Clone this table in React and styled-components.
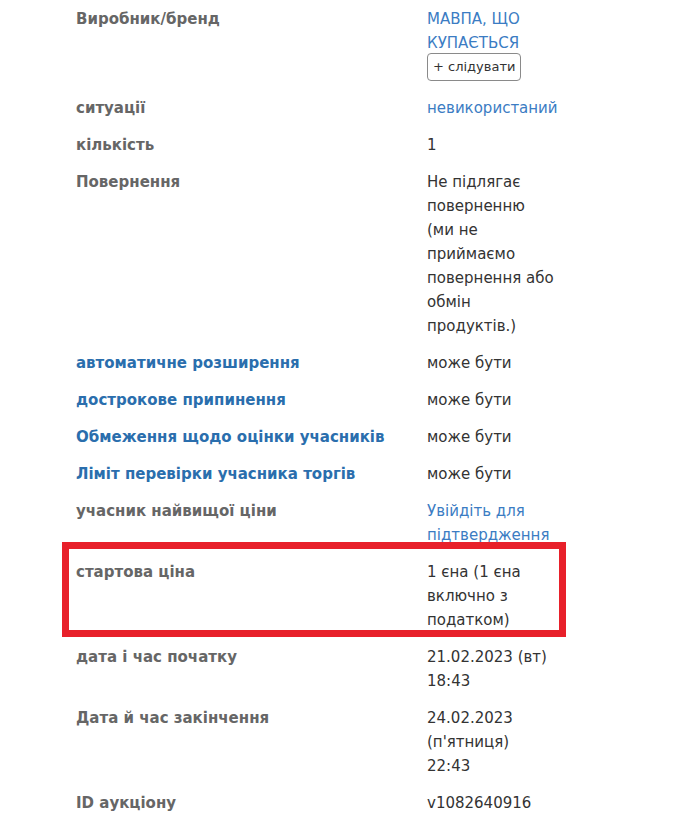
import React from "react";
import styled, { createGlobalStyle } from "styled-components";

const Global = createGlobalStyle`
  html, body { margin: 0; padding: 0; background: #fff; }
  body { font-family: "DejaVu Sans", Verdana, sans-serif; }
`;

const Table = styled.div`
  padding: 0 0 20px 76px;
  display: flex;
  flex-direction: column;
  align-items: flex-start;
`;

const Row = styled.div`
  position: relative;
  display: grid;
  grid-template-columns: 351px 128px;
  padding: 6.5px 0;
  ${(p) =>
    p.$highlight &&
    `
    &::after {
      content: "";
      position: absolute;
      top: -11px;
      left: -14px;
      right: -11px;
      bottom: 1px;
      border: 7px solid #e8202a;
      pointer-events: none;
    }
  `}
`;

const Label = styled.div`
  font-family: "DejaVu Sans", Verdana, sans-serif;
  font-weight: bold;
  font-size: 15px;
  line-height: 24px;
  color: ${(p) => (p.$blue ? "#2a6ead" : "#666666")};
`;

const Value = styled.div`
  font-size: 15px;
  line-height: 24px;
  color: ${(p) => (p.$link ? "#3b7cc3" : "#333333")};
`;

const Brand = styled.span`
  display: block;
  color: #3b7cc3;
`;

const FollowButton = styled.button`
  display: block;
  box-sizing: border-box;
  margin: -2px 0 2px;
  padding: 4px 5px;
  height: 28px;
  border: 1px solid #8a8a8a;
  border-radius: 4px;
  background: #fff;
  color: #333;
  font-family: "DejaVu Sans", Verdana, sans-serif;
  font-size: 13px;
  line-height: 18px;
  cursor: pointer;
`;

const rows = [
  { label: "ситуації", value: "невикористаний", link: true },
  { label: "кількість", value: "1" },
  {
    label: "Повернення",
    value: "Не підлягає поверненню (ми не приймаємо повернення або обмін продуктів.)",
  },
  { label: "автоматичне розширення", value: "може бути", blue: true },
  { label: "дострокове припинення", value: "може бути", blue: true },
  { label: "Обмеження щодо оцінки учасників", value: "може бути", blue: true },
  { label: "Ліміт перевірки учасника торгів", value: "може бути", blue: true },
  { label: "учасник найвищої ціни", value: "Увійдіть для підтвердження", link: true },
  { label: "стартова ціна", value: "1 єна (1 єна включно з податком)", highlight: true },
  { label: "дата і час початку", value: "21.02.2023 (вт) 18:43" },
  { label: "Дата й час закінчення", value: "24.02.2023 (п'ятниця) 22:43" },
  { label: "ID аукціону", value: "v1082640916" },
];

export default function App() {
  return (
    <>
      <Global />
      <Table>
        <Row>
          <Label>Виробник/бренд</Label>
          <Value>
            <Brand>МАВПА, ЩО КУПАЄТЬСЯ</Brand>
            <FollowButton>+ слідувати</FollowButton>
          </Value>
        </Row>
        {rows.map((r) => (
          <Row key={r.label} $highlight={r.highlight}>
            <Label $blue={r.blue}>{r.label}</Label>
            <Value $link={r.link}>{r.value}</Value>
          </Row>
        ))}
      </Table>
    </>
  );
}
